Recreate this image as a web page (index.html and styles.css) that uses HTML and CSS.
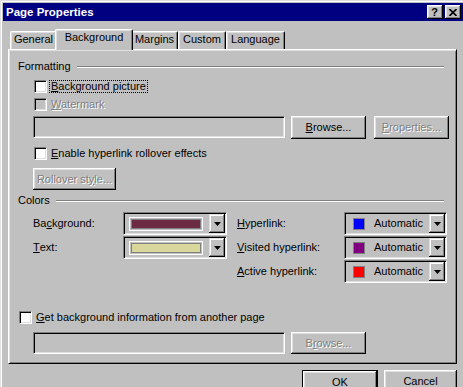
FILE: index.html
```html
<!DOCTYPE html>
<html>
<head>
<meta charset="utf-8">
<link rel="stylesheet" href="styles.css">
</head>
<body>
<div class="window">
  <div class="frame">
    <div class="titlebar">
      <span class="title">Page Properties</span>
      <div class="tbtns">
        <div class="tbtn help">?</div>
        <div class="tbtn close"><svg width="8" height="7" viewBox="0 0 8 7"><path d="M0.5 0 L7.5 7 M7.5 0 L0.5 7" stroke="#000" stroke-width="1.6" fill="none"/></svg></div>
      </div>
    </div>

    <div class="tabs">
      <div class="tab w-general">General</div>
      <div class="tab w-background active">Background</div>
      <div class="tab w-margins">Margins</div>
      <div class="tab w-custom">Custom</div>
      <div class="tab w-language">Language</div>
    </div>

    <div class="panel">
      <div class="group-head first"><span>Formatting</span><div class="etch"></div></div>

      <div class="check-row ind r1">
        <div class="cb"></div>
        <span class="lbl focus"><u>B</u>ackground picture</span>
      </div>
      <div class="check-row ind r2">
        <div class="cb disabled"></div>
        <span class="lbl dis"><u>W</u>atermark</span>
      </div>

      <div class="field-row r3">
        <div class="field"></div>
        <div class="btn w75 h23"><u>B</u>rowse...</div>
        <div class="btn w75 h23 dis gap8"><u>P</u>roperties...</div>
      </div>

      <div class="check-row ind r4">
        <div class="cb"></div>
        <span class="lbl"><u>E</u>nable hyperlink rollover effects</span>
      </div>

      <div class="btn rollover dis">Rollover st<u>y</u>le...</div>

      <div class="group-head colors-head"><span>Colors</span><div class="etch"></div></div>

      <div class="colors">
        <div class="clabel">Ba<u>c</u>kground:</div>
        <div class="combo"><div class="val sel"><div class="selbox"><div class="bigsw maroon"></div></div></div><div class="drop"><svg width="7" height="4" viewBox="0 0 7 4"><path d="M0 0H7L3.5 4Z" fill="#000"/></svg></div></div>
        <div class="clabel right"><u>H</u>yperlink:</div>
        <div class="combo"><div class="val auto"><div class="sw blue"></div><span class="autotxt">Automatic</span></div><div class="drop"><svg width="7" height="4" viewBox="0 0 7 4"><path d="M0 0H7L3.5 4Z" fill="#000"/></svg></div></div>

        <div class="clabel"><u>T</u>ext:</div>
        <div class="combo"><div class="val sel"><div class="selbox"><div class="bigsw khaki"></div></div></div><div class="drop"><svg width="7" height="4" viewBox="0 0 7 4"><path d="M0 0H7L3.5 4Z" fill="#000"/></svg></div></div>
        <div class="clabel right"><u>V</u>isited hyperlink:</div>
        <div class="combo"><div class="val auto"><div class="sw purple"></div><span class="autotxt">Automatic</span></div><div class="drop"><svg width="7" height="4" viewBox="0 0 7 4"><path d="M0 0H7L3.5 4Z" fill="#000"/></svg></div></div>

        <div></div>
        <div></div>
        <div class="clabel right"><u>A</u>ctive hyperlink:</div>
        <div class="combo"><div class="val auto"><div class="sw red"></div><span class="autotxt">Automatic</span></div><div class="drop"><svg width="7" height="4" viewBox="0 0 7 4"><path d="M0 0H7L3.5 4Z" fill="#000"/></svg></div></div>
      </div>

      <div class="check-row getbg">
        <div class="cb"></div>
        <span class="lbl"><u>G</u>et background information from another page</span>
      </div>

      <div class="field-row r5">
        <div class="field"></div>
        <div class="btn w75 h22 dis">B<u>r</u>owse...</div>
      </div>
    </div>

    <div class="actions">
      <div class="btn default">OK</div>
      <div class="btn cancel">Cancel</div>
    </div>
  </div>
</div>
</body>
</html>
```

FILE: styles.css
```css
* { box-sizing: border-box; }

body {
  margin: 0;
  width: 463px;
  height: 387px;
  overflow: hidden;
  background: #c0c0c0;
  font-family: "Liberation Sans", Arial, sans-serif;
  font-size: 11px;
  line-height: 13px;
  color: #000;
}

u { text-decoration: underline; text-underline-offset: 1px; }

.window {
  width: 470px;
  height: 400px;
  border-top: 1px solid #dfdfdf;
  border-left: 1px solid #dfdfdf;
}

.frame {
  height: 100%;
  border-top: 1px solid #fff;
  border-left: 1px solid #fff;
  padding: 1px 0 0 1px;
}

/* title bar */
.titlebar {
  width: 460px;
  height: 18px;
  background: #000080;
  display: flex;
  align-items: center;
  padding-left: 3px;
}
.title {
  color: #fff;
  font-weight: bold;
  font-size: 11.5px;
}
.tbtns {
  margin-left: auto;
  margin-right: 2px;
  display: flex;
  gap: 2px;
}
.tbtn {
  width: 16px;
  height: 14px;
  background: #c0c0c0;
  box-shadow: inset -1px -1px #000, inset 1px 1px #fff, inset -2px -2px #808080, inset 2px 2px #dfdfdf;
  display: flex;
  align-items: center;
  justify-content: center;
  font-weight: bold;
  font-size: 11px;
  line-height: 12px;
}
.tbtn.help { padding-right: 1px; }
.tbtn.close svg { display: block; margin-left: -1px; }

/* tabs */
.tabs {
  margin-top: 8px;
  margin-left: 7px;
  height: 20px;
  display: flex;
  align-items: flex-end;
}
.tab {
  height: 18px;
  background: #c0c0c0;
  border-top: 1px solid #fff;
  border-left: 1px solid #fff;
  border-right: 1px solid #000;
  border-radius: 2px 2px 0 0;
  box-shadow: inset -1px 0 #808080, inset 1px 1px #dfdfdf;
  padding-top: 1px;
  text-align: center;
}
.w-general { width: 47px; }
.w-background { width: 74px; }
.w-margins { width: 47px; }
.w-custom { width: 48px; }
.w-language { width: 59px; }
.tab.active {
  position: relative;
  z-index: 1;
  width: 78px;
  height: 21px;
  margin: 0 -2px -1px;
}

/* panel */
.panel {
  margin-left: 5px;
  width: 449px;
  height: 315px;
  border: 1px solid;
  border-color: #fff #000 #000 #fff;
  box-shadow: inset 1px 1px #dfdfdf, inset -1px -1px #808080;
  padding-left: 9px;
}

.group-head {
  display: flex;
  align-items: center;
  gap: 6px;
  margin-right: 12px;
  height: 13px;
}
.group-head.first { margin-top: 10px; }
.group-head.colors-head { margin-top: 4px; }
.etch {
  flex: 1;
  height: 2px;
  border-top: 1px solid #808080;
  border-bottom: 1px solid #fff;
}

.check-row {
  display: flex;
  align-items: center;
  height: 13px;
}
.check-row.ind { margin-left: 16px; }
.r1 { margin-top: 7px; }
.r2 { margin-top: 5px; }
.r4 { margin-top: 8px; }
.getbg { margin-top: 27px; margin-left: 1px; }

.cb {
  width: 13px;
  height: 13px;
  flex: none;
  background: #fff;
  border-top: 1px solid #808080;
  border-left: 1px solid #808080;
  border-right: 1px solid #fff;
  border-bottom: 1px solid #fff;
  box-shadow: inset 1px 1px #000, inset -1px -1px #dfdfdf;
}
.cb.disabled { background: #c0c0c0; }

.lbl { margin-left: 4px; white-space: nowrap; }
.lbl.focus {
  margin-left: 2px;
  border: 1px dotted #000;
  padding: 0 1px;
  line-height: 11px;
}
.dis { color: #808080; text-shadow: 1px 1px 0 #fff; }

.field-row {
  display: flex;
  align-items: flex-start;
  margin-left: 15px;
  gap: 6px;
}
.r3 { margin-top: 5px; }
.r5 { margin-top: 8px; }

.field {
  width: 252px;
  height: 22px;
  border-top: 1px solid #808080;
  border-left: 1px solid #808080;
  border-right: 1px solid #fff;
  border-bottom: 1px solid #fff;
  box-shadow: inset 1px 1px #000, inset -1px -1px #dfdfdf;
  background: #c0c0c0;
}

.btn {
  display: flex;
  align-items: center;
  justify-content: center;
  background: #c0c0c0;
  box-shadow: inset -1px -1px #000, inset 1px 1px #fff, inset -2px -2px #808080, inset 2px 2px #dfdfdf;
  white-space: nowrap;
}
.w75 { width: 75px; }
.h23 { height: 23px; }
.h22 { height: 22px; }
.gap8 { margin-left: 2px; }

.rollover {
  width: 83px;
  height: 22px;
  margin-left: 15px;
  margin-top: 8px;
}

/* colors grid */
.colors {
  display: grid;
  grid-template-columns: 90px 104px 117px 103px;
  grid-auto-rows: 24px;
  margin-left: 15px;
  margin-top: 5px;
}
.clabel {
  display: flex;
  align-items: center;
  height: 23px;
  white-space: nowrap;
}
.clabel.right { padding-left: 10px; }

.combo {
  height: 23px;
  display: flex;
  border: 1px solid;
  border-color: #808080 #fff #fff #808080;
  box-shadow: inset 1px 1px #000, inset -1px -1px #dfdfdf;
  padding: 1px;
}
.val {
  flex: 1;
  display: flex;
  align-items: center;
}
.val.sel {
  padding: 3px 6px 2px 4px;
  align-items: stretch;
}
.selbox {
  flex: 1;
  border: 1px solid #fff;
  padding: 1px;
  display: flex;
}
.bigsw {
  flex: 1;
  border: 1px solid #808080;
}
.maroon { background: #6d2a43; }
.khaki { background: #d9d79b; }

.val.auto { padding-left: 7px; }
.sw {
  width: 12px;
  height: 12px;
  border: 1px solid #808080;
  flex: none;
}
.blue { background: #0000ff; }
.purple { background: #800080; }
.red { background: #ff0000; }
.autotxt { margin-left: 9px; }

.drop {
  width: 16px;
  height: 19px;
  flex: none;
  display: flex;
  align-items: center;
  justify-content: center;
  box-shadow: inset -1px -1px #000, inset 1px 1px #dfdfdf, inset -2px -2px #808080, inset 2px 2px #fff;
  background: #c0c0c0;
}
.drop svg { display: block; margin-top: 1px; }

/* bottom buttons */
.actions {
  width: 454px;
  margin-top: 6px;
  display: flex;
  justify-content: flex-end;
  gap: 6px;
}
.default {
  width: 76px;
  height: 24px;
  border: 1px solid #000;
}
.cancel {
  width: 73px;
  height: 23px;
}
```
